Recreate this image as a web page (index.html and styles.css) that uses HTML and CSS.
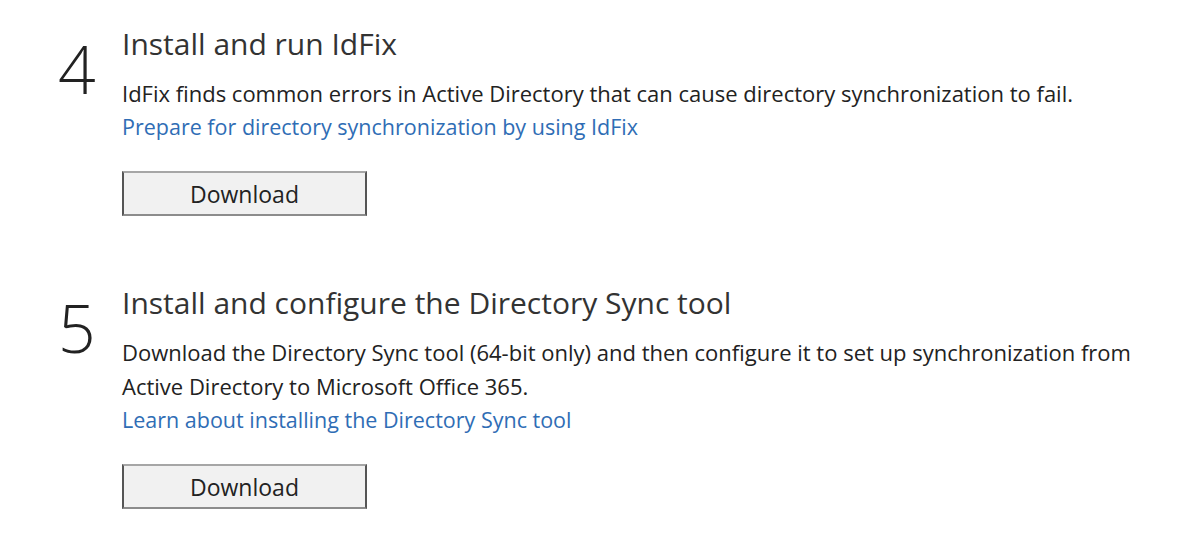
FILE: index.html
```html
<html lang="en"><head>
    <meta charset="UTF-8">
    <meta name="viewport" content="width=device-width, initial-scale=1.0">
    <title>Directory synchronization steps</title>
    <link rel="stylesheet" href="styles.css">
</head>
<body>
    <div class="steps">
        <div class="step">
            <div class="step-num">4</div>
            <div class="step-body">
                <h2 class="step-title">Install and run IdFix</h2>
                <p class="step-desc">IdFix finds common errors in Active Directory that can cause directory synchronization to fail.</p>
                <a class="step-link" href="#">Prepare for directory synchronization by using IdFix</a>
                <div class="step-action">
                    <button type="button">Download</button>
                </div>
            </div>
        </div>
        <div class="step">
            <div class="step-num">5</div>
            <div class="step-body">
                <h2 class="step-title">Install and configure the Directory Sync tool</h2>
                <p class="step-desc">Download the Directory Sync tool (64-bit only) and then configure it to set up synchronization from Active Directory to Microsoft Office 365.</p>
                <a class="step-link" href="#">Learn about installing the Directory Sync tool</a>
                <div class="step-action">
                    <button type="button">Download</button>
                </div>
            </div>
        </div>
    </div>
</body></html>
```

FILE: styles.css
```css
body {
    margin: 0;
    background-color: white;
    font-family: "Open Sans", "Noto Sans", sans-serif;
    color: #222;
}
.steps {
    padding: 24px 0 0 58px;
}
.step {
    display: flex;
    margin-bottom: 67px;
}
.step-num {
    width: 64px;
    flex-shrink: 0;
    margin-top: 11px;
    font-size: 66px;
    font-weight: 300;
    line-height: 1;
    color: #222;
}
.step-body {
    display: flex;
    flex-direction: column;
    align-items: flex-start;
    width: 1040px;
}
.step-title {
    margin: 0 0 12px 0;
    font-size: 30px;
    font-weight: 400;
    line-height: 40px;
    color: #333;
}
.step-desc {
    margin: 0;
    font-size: 22px;
    line-height: 34px;
}
.step-link {
    font-size: 21.5px;
    line-height: 34px;
    color: #2f6db5;
    text-decoration: none;
}
.step-action {
    margin-top: 27px;
}
.step-action button {
    width: 245px;
    height: 45px;
    font-family: inherit;
    font-size: 23px;
    color: #222;
    background-color: #f1f1f1;
    border: 2px solid #8c8c8c;
    border-left-color: #555;
    border-right-color: #555;
    border-top-color: #a6a6a6;
}
```
